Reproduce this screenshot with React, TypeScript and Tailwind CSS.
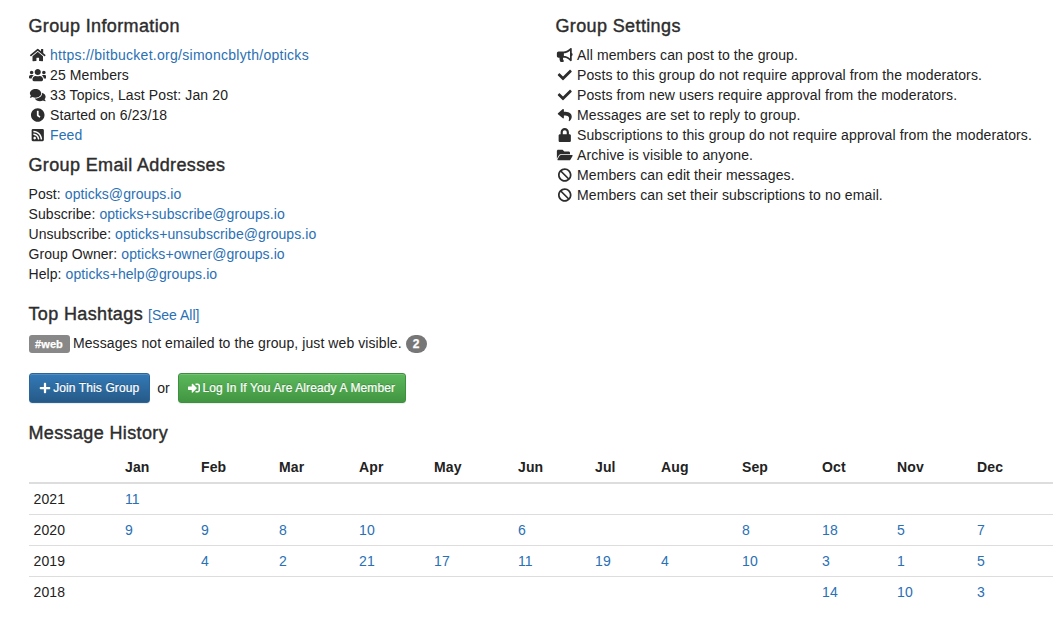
import type { ReactNode } from "react";
import type { IconType } from "react-icons";
import {
  FaBan,
  FaBullhorn,
  FaCheck,
  FaClock,
  FaComments,
  FaFolderOpen,
  FaHome,
  FaLock,
  FaPlus,
  FaReply,
  FaRssSquare,
  FaSignInAlt,
  FaUsers,
} from "react-icons/fa";

const months = ["Jan", "Feb", "Mar", "Apr", "May", "Jun", "Jul", "Aug", "Sep", "Oct", "Nov", "Dec"];

const history: { year: string; counts: (number | null)[] }[] = [
  { year: "2021", counts: [11, null, null, null, null, null, null, null, null, null, null, null] },
  { year: "2020", counts: [9, 9, 8, 10, null, 6, null, null, 8, 18, 5, 7] },
  { year: "2019", counts: [null, 4, 2, 21, 17, 11, 19, 4, 10, 3, 1, 5] },
  { year: "2018", counts: [null, null, null, null, null, null, null, null, null, 14, 10, 3] },
];

const emails = [
  ["Post", "opticks@groups.io"],
  ["Subscribe", "opticks+subscribe@groups.io"],
  ["Unsubscribe", "opticks+unsubscribe@groups.io"],
  ["Group Owner", "opticks+owner@groups.io"],
  ["Help", "opticks+help@groups.io"],
];

const settings: [IconType, string][] = [
  [FaBullhorn, "All members can post to the group."],
  [FaCheck, "Posts to this group do not require approval from the moderators."],
  [FaCheck, "Posts from new users require approval from the moderators."],
  [FaReply, "Messages are set to reply to group."],
  [FaLock, "Subscriptions to this group do not require approval from the moderators."],
  [FaFolderOpen, "Archive is visible to anyone."],
  [FaBan, "Members can edit their messages."],
  [FaBan, "Members can set their subscriptions to no email."],
];

function Heading({ children }: { children: ReactNode }) {
  return (
    <h4 className="h-5 text-[18px] leading-5 tracking-[0.37px] text-[#2d2d2d] [-webkit-text-stroke:0.4px_#2d2d2d]">
      {children}
    </h4>
  );
}

function Link({ children }: { children: ReactNode }) {
  return (
    <a href="#" className="text-[#2a70b4]">
      {children}
    </a>
  );
}

function IconRow({ icon: Icon, children }: { icon: IconType; children: ReactNode }) {
  return (
    <li className="flex h-5 items-center">
      <Icon className="mr-1 h-[14px] w-[17.5px] shrink-0 text-[#2d2d2d]" />
      <span className="whitespace-nowrap">{children}</span>
    </li>
  );
}

export default function App() {
  return (
    <main className="h-[642px] w-[1055px] overflow-hidden bg-white pl-[28.5px] pr-[2px] pt-4 font-['Liberation_Sans',Arial,sans-serif] text-[14px] leading-5 tracking-[0.115px] text-[#222]">
      <div className="flex">
        <div className="w-[527px] shrink-0">
          <Heading>Group Information</Heading>
          <ul className="mt-[9px]">
            <IconRow icon={FaHome}>
              <span className="tracking-[0.28px]">
                <Link>https://bitbucket.org/simoncblyth/opticks</Link>
              </span>
            </IconRow>
            <IconRow icon={FaUsers}>25 Members</IconRow>
            <IconRow icon={FaComments}>33 Topics, Last Post: Jan 20</IconRow>
            <IconRow icon={FaClock}>Started on 6/23/18</IconRow>
            <IconRow icon={FaRssSquare}>
              <Link>Feed</Link>
            </IconRow>
          </ul>
          <div className="mt-[10px]">
            <Heading>Group Email Addresses</Heading>
          </div>
          <ul className="mt-[9px] tracking-[0.075px]">
            {emails.map(([label, address]) => (
              <li key={label}>
                {label}: <Link>{address}</Link>
              </li>
            ))}
          </ul>
          <div className="mt-5 flex items-baseline gap-[5px] tracking-normal">
            <Heading>Top Hashtags</Heading>
            <Link>[See All]</Link>
          </div>
          <div className="mt-2 flex h-5 items-center tracking-[0.08px]">
            <span className="mr-[3.5px] mt-px flex h-[18px] w-[41px] items-center justify-center rounded-[3px] bg-[#888] text-[11px] font-bold text-white [-webkit-text-stroke:0.25px_white]">
              #web
            </span>
            <span>Messages not emailed to the group, just web visible.</span>
            <span className="ml-[4px] mt-px flex h-[18px] w-[21px] items-center justify-center rounded-full bg-[#777] text-[12px] font-bold text-white [-webkit-text-stroke:0.25px_white]">
              2
            </span>
          </div>
        </div>
        <div>
          <Heading>Group Settings</Heading>
          <ul className="mt-[9px]">
            {settings.map(([icon, text]) => (
              <IconRow key={text} icon={icon}>
                {text}
              </IconRow>
            ))}
          </ul>
        </div>
      </div>
      <div className="mt-5 flex items-center">
        <button className="flex h-[30px] w-[121px] items-center justify-center gap-[2.5px] whitespace-nowrap rounded-[3px] border border-[#2b669a] bg-linear-to-b from-[#337ab7] to-[#265a88] pb-px text-[12px] text-white shadow-[inset_0_1px_0_rgba(255,255,255,0.15),0_1px_1px_rgba(0,0,0,0.075)] [-webkit-text-stroke:0.2px_white] [text-shadow:0_-1px_0_rgba(0,0,0,0.2)]">
          <FaPlus className="size-3" />
          <span>Join This Group</span>
        </button>
        <span className="w-[28px] pb-px text-center">or</span>
        <button className="flex h-[30px] w-[228px] items-center justify-center gap-[2.5px] whitespace-nowrap rounded-[3px] border border-[#3e8f3e] bg-linear-to-b from-[#5cb85c] to-[#419641] pb-px text-[12px] text-white shadow-[inset_0_1px_0_rgba(255,255,255,0.15),0_1px_1px_rgba(0,0,0,0.075)] [-webkit-text-stroke:0.2px_white] [text-shadow:0_-1px_0_rgba(0,0,0,0.2)]">
          <FaSignInAlt className="size-3" />
          <span>Log In If You Are Already A Member</span>
        </button>
      </div>
      <div className="mt-5">
        <Heading>Message History</Heading>
      </div>
      <table className="mt-[9px] w-[1024px] table-fixed border-collapse text-left">
        <colgroup>
          <col className="w-[91px]" />
          <col className="w-[76px]" />
          <col className="w-[78px]" />
          <col className="w-[80px]" />
          <col className="w-[75px]" />
          <col className="w-[84px]" />
          <col className="w-[77px]" />
          <col className="w-[66px]" />
          <col className="w-[81px]" />
          <col className="w-[80px]" />
          <col className="w-[75px]" />
          <col className="w-[80px]" />
          <col className="w-[81px]" />
        </colgroup>
        <thead>
          <tr className="h-[31px] border-b-2 border-[#ddd]">
            <th />
            {months.map((month) => (
              <th key={month} className="p-[5px] pl-[5.5px] font-bold">
                {month}
              </th>
            ))}
          </tr>
        </thead>
        <tbody>
          {history.map(({ year, counts }) => (
            <tr key={year} className="h-[31px] border-b border-[#ddd] last:border-b-0">
              <td className="p-[5px]">{year}</td>
              {counts.map((count, i) => (
                <td key={months[i]} className="p-[5px] pl-[5.5px]">
                  {count !== null && <Link>{count}</Link>}
                </td>
              ))}
            </tr>
          ))}
        </tbody>
      </table>
    </main>
  );
}
